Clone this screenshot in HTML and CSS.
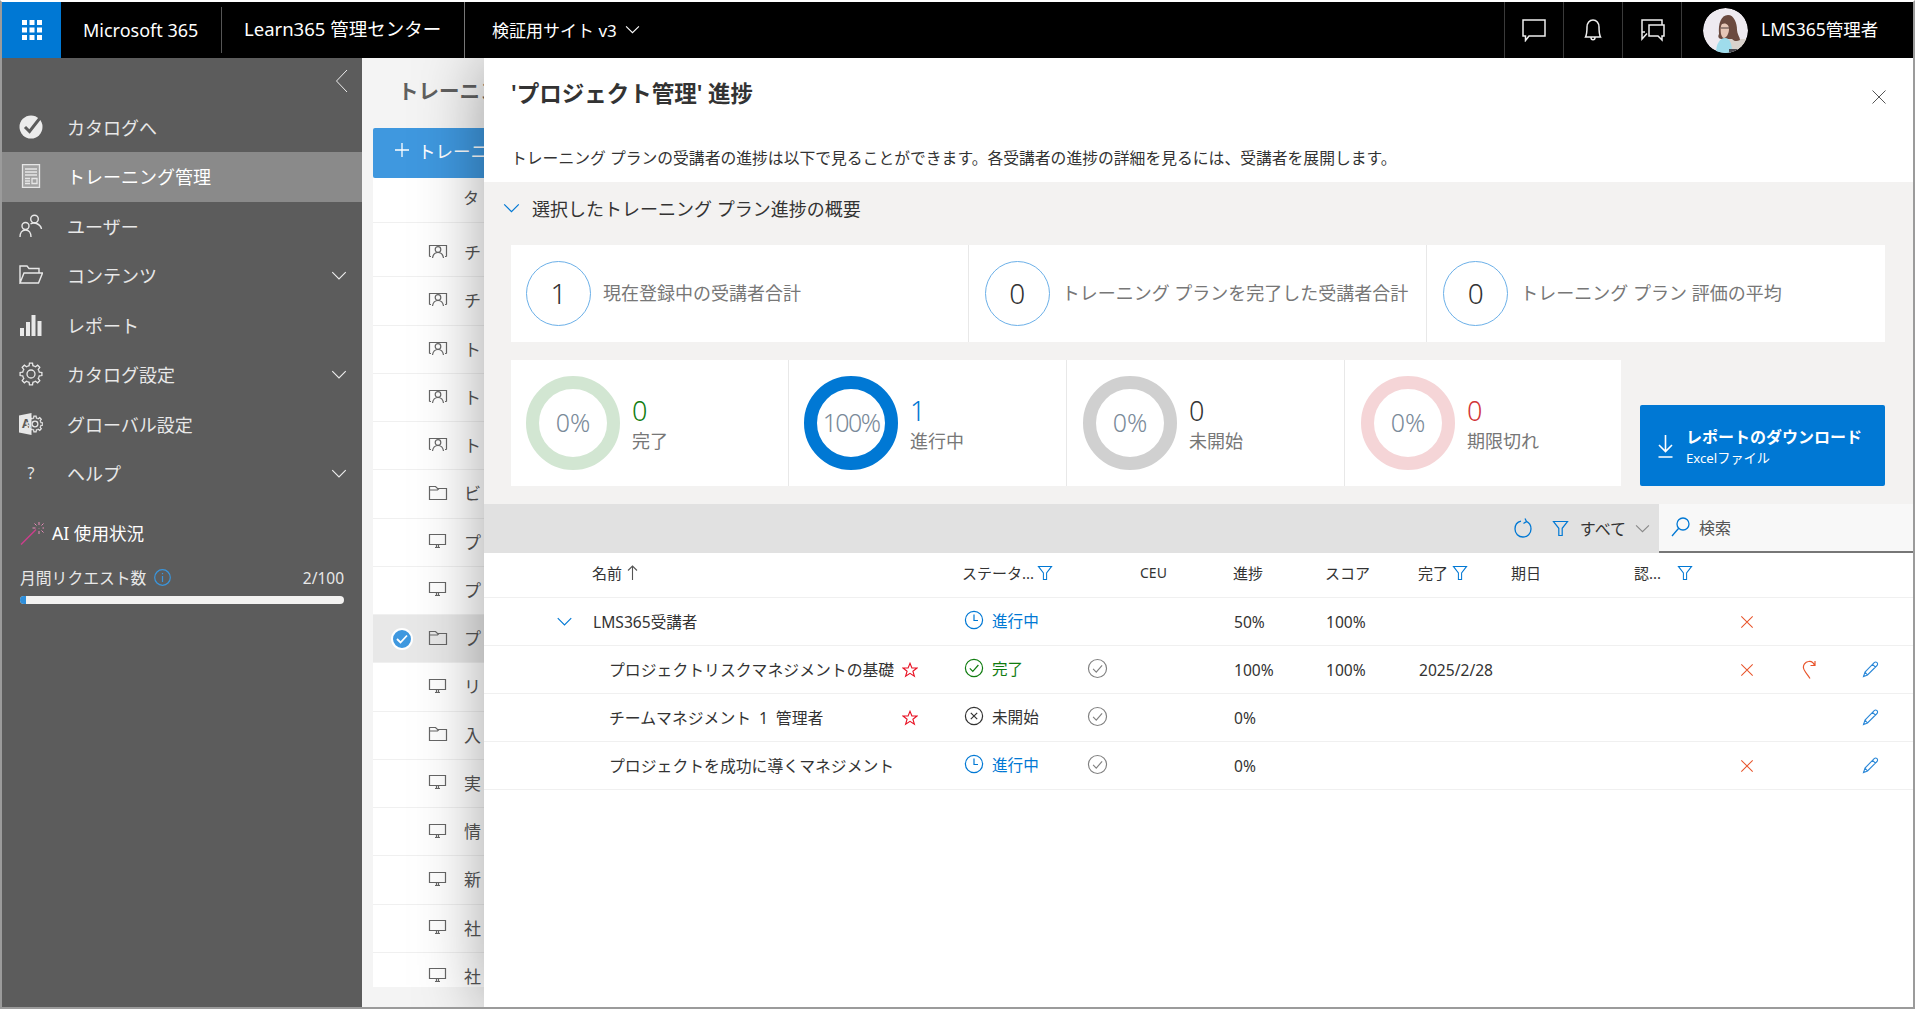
FILE: index.html
```html
<!DOCTYPE html>
<html lang="ja">

<head>
    <meta charset="UTF-8">
    <meta name="viewport" content="width=device-width, initial-scale=1.0">
    <title>プロジェクト管理 進捗</title>
    <link rel="stylesheet" href="styles.css">
</head>

<body>
    <svg class="icon-defs" width="0" height="0">
        <defs>
            <g id="gear-tooth"><path d="M-3.25 -7.85L-1.91 -8.28L-1.53 -10.89L1.53 -10.89L1.91 -8.28L3.25 -7.85"/></g>
            <g id="gear">
                <use href="#gear-tooth"/>
                <use href="#gear-tooth" transform="rotate(45)"/>
                <use href="#gear-tooth" transform="rotate(90)"/>
                <use href="#gear-tooth" transform="rotate(135)"/>
                <use href="#gear-tooth" transform="rotate(180)"/>
                <use href="#gear-tooth" transform="rotate(225)"/>
                <use href="#gear-tooth" transform="rotate(270)"/>
                <use href="#gear-tooth" transform="rotate(315)"/>
                <circle r="4"/>
            </g>
            <g id="i-presenter"><path d="M1.5 12.5V1.5H18.5V12.5M1.5 12.5H3M17 12.5H18.5"/><circle cx="10" cy="5.5" r="2.8"/><path d="M4.5 14C5 10.5 7 8.5 10 8.5S15 10.5 15.5 14"/></g>
            <g id="i-monitor"><path d="M1.5 1.5H17.5V11.5H1.5ZM7 14.5H12"/><path d="M8.5 11.5H10.5V14.5H8.5Z" class="solid"/></g>
            <g id="i-folder"><path d="M1.5 14.5V1.5H7.5L9.5 3.5H18.5V14.5ZM1.5 5H9.5L11 3.5"/></g>
            <g id="i-funnel"><path d="M1 1.5H15L9.7 8.3V15.5H6.3V8.3Z"/></g>
            <g id="i-clock"><circle cx="10" cy="10" r="8.6"/><path d="M10 4.5V10.5H14"/></g>
            <g id="i-check"><circle cx="10" cy="10" r="8.6"/><path d="M5.8 10.4L8.8 13.4L14.4 7"/></g>
            <g id="i-xcircle"><circle cx="10" cy="10" r="8.6"/><path d="M6.8 6.8L13.2 13.2M13.2 6.8L6.8 13.2"/></g>
            <g id="i-star"><path d="M8 1.3L9.9 6H15L10.9 9.2L12.4 14.3L8 11.3L3.6 14.3L5.1 9.2L1 6H6.1Z"/></g>
            <g id="i-cross"><path d="M1.5 1.5L14.5 14.5M14.5 1.5L1.5 14.5"/></g>
            <g id="i-pencil"><path d="M12.2 1.7C13 .9 14.2 .9 15 1.7S15.8 3.7 15 4.5L5.5 14L1.5 15.5L3 11ZM10.6 3.4L13.4 6.2M3 11L5.5 14"/></g>
            <g id="i-chev-down"><path d="M1 1L7 7L13 1"/></g>
        </defs>
    </svg>

    <div class="app">
        <header class="topbar">
            <a class="waffle">
                <svg width="20" height="20" viewBox="0 0 20 20"><path fill="#fff" d="M0 0h5v5H0zM7.500 0h5v5h-5zM15 0h5v5h-5zM0 7.500h5v5H0zM7.500 7.500h5v5h-5zM15 7.500h5v5h-5zM0 15h5v5H0zM7.500 15h5v5h-5zM15 15h5v5h-5z"/></svg>
            </a>
            <div class="topbar-brand">Microsoft 365</div>
            <div class="topbar-app">Learn365 管理センター</div>
            <div class="topbar-site">
                検証用サイト v3
                <svg class="stroke" width="15" height="9" viewBox="0 0 14 8" stroke="#fff"><use href="#i-chev-down"/></svg>
            </div>
            <div class="topbar-right">
                <div class="topbar-icon">
                    <svg class="stroke" width="24" height="24" viewBox="0 0 24 24" stroke="#eee" stroke-width="1.5"><path d="M1 2H23V18H7L3.500 22.500V18H1Z"/></svg>
                </div>
                <div class="topbar-icon">
                    <svg class="stroke" width="18" height="24" viewBox="0 0 18 24" stroke="#eee" stroke-width="1.500"><path d="M1.500 19C3 16 3 13 3 9C3 5 5.500 2 9 2S15 5 15 9C15 13 15 16 16.500 19ZM7 19.500C7 22.500 11 22.500 11 19.500"/></svg>
                </div>
                <div class="topbar-icon">
                    <svg class="stroke" width="25" height="24" viewBox="0 0 25 24" stroke="#eee" stroke-width="1.500"><path d="M5 14H2V2H22V7M2 14V21L7 15.500M9 7H24V18H22V22L18 18H9Z"/></svg>
                </div>
                <div class="topbar-user">
                    <svg class="avatar" width="45" height="45" viewBox="0 0 45 45">
                        <circle cx="22.500" cy="22.500" r="22.500" fill="#eeeaf0"/>
                        <path fill="#d9d2cc" d="M26 31H45V45H26Z"/>
                        <path fill="#6b4a3f" d="M16 26C15 16 18 7 25 7C31 7 34 15 34 22C34 26 37 29 37 32C33 34 31 33 29 31H19C17 31 14 30 16 26Z"/>
                        <path fill="#e6c6b6" d="M18 18C19 14 26 15 26 21C26 26 23 30 21 30C18 30 17 23 18 18Z"/>
                        <path stroke="#4a3a38" fill="none" d="M18 20H26"/>
                        <path fill="#9fdcec" d="M13 45C13 36 17 30 22 30C27 30 29 36 29 45Z"/>
                        <path fill="#4a4a50" d="M26 41H34V45H26Z"/>
                    </svg>
                    LMS365管理者
                </div>
            </div>
        </header>

        <div class="shell">
            <nav class="sidebar">
                <div class="sidebar-collapse">
                    <svg class="stroke" width="13" height="24" viewBox="0 0 13 24" stroke="#eee"><path d="M12 1L1.500 12L12 23"/></svg>
                </div>
                <ul class="nav">
                    <li class="nav-item">
                        <svg class="nav-icon" width="24" height="24" viewBox="0 0 24 24"><circle cx="12" cy="12" r="11.500" fill="#ececec"/><path d="M6 12L10.500 16.500L21 3" fill="none" stroke="#5c5c5c" stroke-width="3"/></svg>
                        カタログへ
                    </li>
                    <li class="nav-item is-active">
                        <svg class="nav-icon stroke" width="24" height="24" viewBox="0 0 24 24" stroke="#e6e6e6" stroke-width="1.300"><path class="nav-doc" d="M3.500 .7H20.500V23.300H3.500Z"/><path d="M6 5H18M6 8H18M6 11H18M6 14.500H11M6 17H11M6 19.500H11M13 14.500H18V19.500H13Z"/></svg>
                        トレーニング管理
                    </li>
                    <li class="nav-item">
                        <svg class="nav-icon stroke" width="24" height="24" viewBox="0 0 24 24" stroke="#e8e8e8" stroke-width="1.400"><circle cx="15.500" cy="5" r="3.800"/><circle cx="6.500" cy="12" r="3.500"/><path d="M11.500 10C13 9 15.500 8.800 17.500 9.500C20 10.500 22 12 22.500 15M1 23C1 19 3 16 6.500 16S12 19 12 23"/></svg>
                        ユーザー
                    </li>
                    <li class="nav-item">
                        <svg class="nav-icon stroke" width="24" height="24" viewBox="0 0 24 24" stroke="#e8e8e8" stroke-width="1.400"><path d="M1 20V3H8L10 5.500H20V10M1 20L5 10H23.500L19.500 20Z"/></svg>
                        コンテンツ
                        <svg class="nav-chevron stroke" width="16" height="9" viewBox="0 0 14 8" stroke="#eee"><use href="#i-chev-down"/></svg>
                    </li>
                    <li class="nav-item">
                        <svg class="nav-icon" width="24" height="24" viewBox="0 0 24 24" fill="#e8e8e8"><path d="M1 15H5V23H1ZM7 9H11V23H7ZM12.500 2H16.500V23H12.500ZM18.500 8H22.500V23H18.500Z"/></svg>
                        レポート
                    </li>
                    <li class="nav-item">
                        <svg class="nav-icon stroke" width="24" height="24" viewBox="0 0 24 24" stroke="#e8e8e8" stroke-width="1.300"><use href="#gear" transform="translate(12 12)"/></svg>
                        カタログ設定
                        <svg class="nav-chevron stroke" width="16" height="9" viewBox="0 0 14 8" stroke="#eee"><use href="#i-chev-down"/></svg>
                    </li>
                    <li class="nav-item">
                        <svg class="nav-icon" width="24" height="24" viewBox="0 0 24 24">
                            <path fill="#e8e8e8" d="M0 3.500L12.500 1V23L0 20.500Z"/>
                            <text x="3" y="16" class="nav-icon-a">A</text>
                            <use href="#gear" class="stroke" stroke="#e8e8e8" transform="translate(16 12) scale(.72)" stroke-width="1.700"/>
                        </svg>
                        グローバル設定
                    </li>
                    <li class="nav-item">
                        <span class="nav-icon nav-help">?</span>
                        ヘルプ
                        <svg class="nav-chevron stroke" width="16" height="9" viewBox="0 0 14 8" stroke="#eee"><use href="#i-chev-down"/></svg>
                    </li>
                </ul>
                <div class="usage">
                    <div class="usage-title">
                        <svg class="stroke" width="24" height="24" viewBox="0 0 24 24" stroke="#cc3f8d">
                            <path d="M1 23.500L16 8.500" stroke-width="1.500"/>
                            <path d="M19 1V4M19 10V13M12.500 7H15.500M22.500 7H24M14.500 2.500L16.500 4.500M21.500 9.500L23.500 11.500M23.500 2.500L21.500 4.500M19 7V7.500" stroke="#e88ab8"/>
                        </svg>
                        AI 使用状況
                    </div>
                    <div class="usage-row">
                        <span class="usage-label">月間リクエスト数</span>
                        <svg class="stroke" width="17" height="17" viewBox="0 0 17 17" stroke="#3a96dd" stroke-width="1.200"><circle cx="8.500" cy="8.500" r="7.800"/><path d="M8.500 7V13M8.500 4V5.300"/></svg>
                        <span class="usage-count">2/100</span>
                    </div>
                    <div class="usage-bar"><div class="usage-fill" style="width: 2%"></div></div>
                </div>
            </nav>

            <main class="main">
                <h1 class="main-title">トレーニン</h1>
                <button class="main-add">
                    <svg class="stroke" width="14" height="14" viewBox="0 0 14 14" stroke="#fff" stroke-width="1.300"><path d="M7 0V14M0 7H14"/></svg>
                    トレーニ
                </button>
                <div class="plans">
                    <div class="plans-head">タ</div>
                    <div class="plan-row"><svg class="plan-icon stroke" width="20" height="15" viewBox="0 0 20 15"><use href="#i-presenter"/></svg>チ</div>
                    <div class="plan-row"><svg class="plan-icon stroke" width="20" height="15" viewBox="0 0 20 15"><use href="#i-presenter"/></svg>チ</div>
                    <div class="plan-row"><svg class="plan-icon stroke" width="20" height="15" viewBox="0 0 20 15"><use href="#i-presenter"/></svg>ト</div>
                    <div class="plan-row"><svg class="plan-icon stroke" width="20" height="15" viewBox="0 0 20 15"><use href="#i-presenter"/></svg>ト</div>
                    <div class="plan-row"><svg class="plan-icon stroke" width="20" height="15" viewBox="0 0 20 15"><use href="#i-presenter"/></svg>ト</div>
                    <div class="plan-row"><svg class="plan-icon stroke" width="20" height="16" viewBox="0 0 20 16"><use href="#i-folder"/></svg>ビ</div>
                    <div class="plan-row"><svg class="plan-icon stroke" width="20" height="16" viewBox="0 0 20 16"><use href="#i-monitor"/></svg>プ</div>
                    <div class="plan-row"><svg class="plan-icon stroke" width="20" height="16" viewBox="0 0 20 16"><use href="#i-monitor"/></svg>プ</div>
                    <div class="plan-row is-selected">
                        <span class="plan-check"><svg class="stroke" width="12" height="10" viewBox="0 0 12 10" stroke="#fff" stroke-width="1.800"><path d="M1 5L4.500 8.500L11 1.500"/></svg></span>
                        <svg class="plan-icon stroke" width="20" height="16" viewBox="0 0 20 16"><use href="#i-folder"/></svg>プ
                    </div>
                    <div class="plan-row"><svg class="plan-icon stroke" width="20" height="16" viewBox="0 0 20 16"><use href="#i-monitor"/></svg>リ</div>
                    <div class="plan-row"><svg class="plan-icon stroke" width="20" height="16" viewBox="0 0 20 16"><use href="#i-folder"/></svg>入</div>
                    <div class="plan-row"><svg class="plan-icon stroke" width="20" height="16" viewBox="0 0 20 16"><use href="#i-monitor"/></svg>実</div>
                    <div class="plan-row"><svg class="plan-icon stroke" width="20" height="16" viewBox="0 0 20 16"><use href="#i-monitor"/></svg>情</div>
                    <div class="plan-row"><svg class="plan-icon stroke" width="20" height="16" viewBox="0 0 20 16"><use href="#i-monitor"/></svg>新</div>
                    <div class="plan-row"><svg class="plan-icon stroke" width="20" height="16" viewBox="0 0 20 16"><use href="#i-monitor"/></svg>社</div>
                    <div class="plan-row"><svg class="plan-icon stroke" width="20" height="16" viewBox="0 0 20 16"><use href="#i-monitor"/></svg>社</div>
                </div>
            </main>

            <section class="panel">
                <button class="panel-close"><svg class="stroke" width="16" height="16" viewBox="0 0 16 16" stroke="#555" stroke-width="1"><use href="#i-cross"/></svg></button>
                <h2 class="panel-title">'プロジェクト管理' 進捗</h2>
                <p class="panel-desc">トレーニング プランの受講者の進捗は以下で見ることができます。各受講者の進捗の詳細を見るには、受講者を展開します。</p>

                <div class="summary">
                    <div class="summary-head">
                        <svg class="stroke" width="17" height="10" viewBox="0 0 14 8" stroke="#0078d4"><use href="#i-chev-down"/></svg>
                        選択したトレーニング プラン進捗の概要
                    </div>
                    <div class="kpis">
                        <div class="kpi"><div class="kpi-circle">1</div><div class="kpi-text">現在登録中の受講者合計</div></div>
                        <div class="kpi"><div class="kpi-circle">0</div><div class="kpi-text">トレーニング プランを完了した受講者合計</div></div>
                        <div class="kpi"><div class="kpi-circle">0</div><div class="kpi-text">トレーニング プラン 評価の平均</div></div>
                    </div>
                    <div class="stats-row">
                        <div class="stats">
                            <div class="stat">
                                <div class="ring ring-green">0%</div>
                                <div class="stat-text"><div class="stat-num num-green">0</div><div class="stat-label">完了</div></div>
                            </div>
                            <div class="stat">
                                <div class="ring ring-blue">100%</div>
                                <div class="stat-text"><div class="stat-num num-blue">1</div><div class="stat-label">進行中</div></div>
                            </div>
                            <div class="stat">
                                <div class="ring ring-grey">0%</div>
                                <div class="stat-text"><div class="stat-num">0</div><div class="stat-label">未開始</div></div>
                            </div>
                            <div class="stat">
                                <div class="ring ring-red">0%</div>
                                <div class="stat-text"><div class="stat-num num-red">0</div><div class="stat-label">期限切れ</div></div>
                            </div>
                        </div>
                        <button class="download">
                            <svg class="stroke" width="17" height="24" viewBox="0 0 16 24" stroke="#fff" stroke-width="1.600"><path d="M8 1V17M1.500 11L8 17.500L14.500 11M1 23H15"/></svg>
                            <span class="download-text"><b>レポートのダウンロード</b><small>Excelファイル</small></span>
                        </button>
                    </div>
                </div>

                <div class="toolbar">
                    <svg class="stroke refresh" width="18" height="20" viewBox="0 0 18 20" stroke="#0078d4" stroke-width="1.300"><path d="M12 3.200C15 4.500 17 7 17 11C17 15.500 13.500 19 9 19S1 15.500 1 11C1 7 3.500 4 7 3.200M11 .5L12.500 3.500L9.500 5.500"/></svg>
                    <svg class="stroke filter-all" width="17" height="17" viewBox="0 0 16 17" stroke="#0078d4" stroke-width="1.200"><use href="#i-funnel"/></svg>
                    <span class="toolbar-all">すべて</span>
                    <svg class="stroke toolbar-chev" width="15" height="9" viewBox="0 0 14 8" stroke="#888"><use href="#i-chev-down"/></svg>
                    <div class="search">
                        <svg class="stroke" width="19" height="20" viewBox="0 0 19 20" stroke="#0078d4" stroke-width="1.300"><circle cx="12" cy="7" r="6"/><path d="M7.700 11.300L1 19"/></svg>
                        検索
                    </div>
                </div>

                <div class="t-row t-head">
                    <span></span>
                    <span class="t-name-head">名前 <svg class="stroke" width="11" height="15" viewBox="0 0 11 15" stroke="#555" stroke-width="1.100"><path d="M5.500 15V1M1 5.500L5.500 1L10 5.500"/></svg></span>
                    <span class="t-filter t-filter-tight">ステータ...<svg class="stroke" width="16" height="16" viewBox="0 0 16 17" stroke="#0078d4" stroke-width="1.100"><use href="#i-funnel"/></svg></span>
                    <span></span>
                    <span class="t-ceu">CEU</span>
                    <span>進捗</span>
                    <span>スコア</span>
                    <span class="t-filter">完了<svg class="stroke" width="16" height="16" viewBox="0 0 16 17" stroke="#0078d4" stroke-width="1.100"><use href="#i-funnel"/></svg></span>
                    <span>期日</span>
                    <span class="t-filter t-filter-wide">認...<svg class="stroke" width="16" height="16" viewBox="0 0 16 17" stroke="#0078d4" stroke-width="1.100"><use href="#i-funnel"/></svg></span>
                    <span></span><span></span><span></span><span></span>
                </div>

                <div class="t-row">
                    <span class="t-expand"><svg class="stroke" width="17" height="9" viewBox="0 0 14 8" stroke="#0078d4"><use href="#i-chev-down"/></svg></span>
                    <span class="t-user">LMS365受講者</span>
                    <span class="t-status st-blue"><svg class="stroke" width="20" height="20" viewBox="0 0 20 20"><use href="#i-clock"/></svg>進行中</span>
                    <span></span><span></span>
                    <span class="t-val">50%</span>
                    <span class="t-val">100%</span>
                    <span></span><span></span><span></span>
                    <span class="t-act t-x"><svg class="stroke" width="14" height="14" viewBox="0 0 16 16"><use href="#i-cross"/></svg></span>
                    <span></span><span></span><span></span>
                </div>
                <div class="t-row">
                    <span></span>
                    <span class="t-course">プロジェクトリスクマネジメントの基礎<svg class="star stroke" width="16" height="16" viewBox="0 0 16 16"><use href="#i-star"/></svg></span>
                    <span class="t-status st-green"><svg class="stroke" width="20" height="20" viewBox="0 0 20 20"><use href="#i-check"/></svg>完了</span>
                    <span class="t-ok"><svg class="stroke" width="21" height="21" viewBox="0 0 20 20"><use href="#i-check"/></svg></span>
                    <span></span>
                    <span class="t-val">100%</span>
                    <span class="t-val">100%</span>
                    <span class="t-val">2025/2/28</span>
                    <span></span><span></span>
                    <span class="t-act t-x"><svg class="stroke" width="14" height="14" viewBox="0 0 16 16"><use href="#i-cross"/></svg></span>
                    <span class="t-act t-x"><svg class="stroke" width="14" height="20" viewBox="0 0 14 20"><path d="M12.500 5.500C11.500 2.500 9 1 6.500 1.500C3 2 1 5 1.500 8C2 11 5 14 8 18.500M8.500 5.500H13V1"/></svg></span>
                    <span class="t-act t-pen"><svg class="stroke" width="17" height="17" viewBox="0 0 17 17"><use href="#i-pencil"/></svg></span>
                    <span></span>
                </div>
                <div class="t-row">
                    <span></span>
                    <span class="t-course">チームマネジメント 1 管理者<svg class="star stroke" width="16" height="16" viewBox="0 0 16 16"><use href="#i-star"/></svg></span>
                    <span class="t-status st-dark"><svg class="stroke" width="20" height="20" viewBox="0 0 20 20"><use href="#i-xcircle"/></svg>未開始</span>
                    <span class="t-ok"><svg class="stroke" width="21" height="21" viewBox="0 0 20 20"><use href="#i-check"/></svg></span>
                    <span></span>
                    <span class="t-val">0%</span>
                    <span></span><span></span><span></span><span></span><span></span><span></span>
                    <span class="t-act t-pen"><svg class="stroke" width="17" height="17" viewBox="0 0 17 17"><use href="#i-pencil"/></svg></span>
                    <span></span>
                </div>
                <div class="t-row">
                    <span></span>
                    <span class="t-course">プロジェクトを成功に導くマネジメント</span>
                    <span class="t-status st-blue"><svg class="stroke" width="20" height="20" viewBox="0 0 20 20"><use href="#i-clock"/></svg>進行中</span>
                    <span class="t-ok"><svg class="stroke" width="21" height="21" viewBox="0 0 20 20"><use href="#i-check"/></svg></span>
                    <span></span>
                    <span class="t-val">0%</span>
                    <span></span><span></span><span></span><span></span>
                    <span class="t-act t-x"><svg class="stroke" width="14" height="14" viewBox="0 0 16 16"><use href="#i-cross"/></svg></span>
                    <span></span>
                    <span class="t-act t-pen"><svg class="stroke" width="17" height="17" viewBox="0 0 17 17"><use href="#i-pencil"/></svg></span>
                    <span></span>
                </div>
            </section>
        </div>
    </div>
</body>

</html>
```

FILE: styles.css
```css
* {
    box-sizing: border-box;
}

html,
body {
    height: 100%;
    margin: 0;
}

body {
    font-family: "Noto Sans", "Noto Sans CJK JP", sans-serif;
    color: #333333;
    background: #ffffff;
    overflow: hidden;
}

button {
    font-family: inherit;
    border: 0;
    padding: 0;
}

ul {
    list-style: none;
    margin: 0;
    padding: 0;
}

.icon-defs {
    position: absolute;
}

.stroke {
    fill: none;
    stroke-linejoin: miter;
}

.stroke .solid {
    fill: currentColor;
}

.app {
    height: 100vh;
    display: flex;
    flex-direction: column;
    border: 2px solid #9b9b9b;
    border-top-color: #ffffff;
}

/* top bar */
.topbar {
    height: 56px;
    flex: none;
    display: flex;
    align-items: center;
    background: #000000;
    color: #ffffff;
    font-size: 18px;
}

.waffle {
    width: 59px;
    height: 100%;
    display: flex;
    align-items: center;
    justify-content: center;
    background: #0078d4;
}

.topbar-brand {
    width: 161px;
    height: 46px;
    padding-left: 22px;
    line-height: 46px;
    border-right: 1px solid #555555;
}

.topbar-app {
    width: 243px;
    height: 100%;
    padding-left: 22px;
    font-size: 18.5px;
    line-height: 54px;
    border-right: 1px solid #777777;
}

.topbar-site {
    padding-left: 27px;
    padding-bottom: 2px;
    display: flex;
    align-items: center;
    gap: 8px;
    font-size: 17px;
}

.topbar-right {
    margin-left: auto;
    height: 100%;
    display: flex;
}

.topbar-icon {
    width: 59px;
    display: flex;
    align-items: center;
    justify-content: center;
    border-left: 1px solid #3a3a3a;
}

.topbar-user {
    width: 232px;
    padding-left: 21px;
    padding-bottom: 3px;
    display: flex;
    align-items: center;
    gap: 13px;
    border-left: 1px solid #3a3a3a;
    font-size: 17.5px;
}

.avatar {
    border-radius: 50%;
    margin-top: 3px;
}

/* layout below top bar */
.shell {
    flex: 1;
    min-height: 0;
    display: flex;
    overflow: hidden;
}

/* left navigation */
.sidebar {
    width: 360px;
    flex: none;
    background: #5c5c5c;
    color: #e8e8e8;
    font-size: 18px;
}

.sidebar-collapse {
    height: 44.5px;
    padding: 11px 14px 0 0;
    text-align: right;
}

.nav-item {
    height: 49.5px;
    display: flex;
    align-items: center;
    padding-left: 17px;
    padding-bottom: 1px;
}

.nav-item.is-active {
    background: #8a8a8a;
    color: #ffffff;
}

.nav-icon {
    width: 24px;
    flex: none;
    margin-right: 24px;
}

.nav-doc {
    fill: rgba(255, 255, 255, 0.22);
}

.nav-icon-a {
    font-size: 12px;
    font-weight: bold;
    fill: #5c5c5c;
}

.nav-help {
    font-size: 16px;
    text-align: center;
}

.nav-chevron {
    margin-left: auto;
    margin-right: 15px;
}

.usage {
    margin-top: 21px;
    padding: 0 18px;
}

.usage-title {
    display: flex;
    align-items: center;
    gap: 8px;
    color: #ffffff;
    font-size: 17.6px;
    height: 26px;
}

.usage-row {
    display: flex;
    align-items: center;
    gap: 8px;
    margin-top: 18px;
    padding-top: 2px;
    height: 26px;
    font-size: 15.8px;
}

.usage-count {
    margin-left: auto;
    font-size: 15.5px;
}

.usage-bar {
    margin-top: 6px;
    height: 8px;
    border-radius: 4px;
    background: #f3f2f1;
    overflow: hidden;
}

.usage-fill {
    height: 100%;
    background: #2f8fdb;
}

/* plan list behind the panel */
.main {
    width: 122px;
    flex: none;
    display: flex;
    flex-direction: column;
    overflow: hidden;
    background: #f4f4f4;
    padding: 0 0 20px 11px;
}

.main-title {
    height: 70px;
    margin: 0;
    padding-left: 25px;
    font-size: 20.5px;
    font-weight: 600;
    line-height: 66px;
    color: #606060;
    white-space: nowrap;
    overflow: hidden;
}

.main-add {
    height: 50px;
    flex: none;
    display: flex;
    align-items: center;
    gap: 9px;
    padding: 0 0 6px 22px;
    text-align: left;
    background: #3f98df;
    color: #ffffff;
    font-size: 17.5px;
    border-radius: 2px 0 0 2px;
    white-space: nowrap;
    overflow: hidden;
}

.main-add svg {
    flex: none;
}

.plans {
    flex: 1;
    min-height: 0;
    overflow: hidden;
    background: #ffffff;
    font-size: 17px;
    color: #555555;
}

.plans-head {
    height: 45px;
    padding-left: 90px;
    line-height: 40px;
    font-size: 16px;
    border-bottom: 1px solid #f0f0f0;
    margin-bottom: 6px;
    white-space: nowrap;
}

.plan-row {
    height: 48.25px;
    position: relative;
    display: flex;
    align-items: center;
    padding-left: 55px;
    padding-bottom: 2px;
    border-bottom: 1px solid #f0f0f0;
    white-space: nowrap;
}

.plan-row.is-selected {
    background: #e8e8e8;
}

.plan-icon {
    width: 20px;
    flex: none;
    margin-right: 16px;
    stroke: #666666;
    stroke-width: 1.2;
    color: #666666;
}

.plan-check {
    position: absolute;
    left: 18px;
    top: 13px;
    width: 22px;
    height: 22px;
    border-radius: 50%;
    background: #3f98df;
    border: 2px solid #ffffff;
    display: flex;
    align-items: center;
    justify-content: center;
}

/* progress panel */
.panel {
    flex: 1;
    min-width: 0;
    position: relative;
    background: #ffffff;
    box-shadow: 0 0 64px rgba(0, 0, 0, 0.36);
}

.panel-close {
    position: absolute;
    right: 26px;
    top: 31px;
    width: 16px;
    height: 16px;
    background: none;
}

.panel-title {
    margin: 0;
    padding: 21px 0 0 27px;
    height: 65px;
    font-size: 22.5px;
    font-weight: 600;
    line-height: 30px;
}

.panel-desc {
    margin: 0;
    height: 59px;
    padding: 23px 0 0 27px;
    font-size: 15.8px;
    line-height: 24px;
    color: #333333;
}

.summary {
    background: #f3f2f1;
    padding: 0 28px 18px 27px;
}

.summary-head {
    height: 63px;
    padding-bottom: 11px;
    margin-left: -8px;
    display: flex;
    align-items: center;
    gap: 12px;
    font-size: 18px;
}

.kpis {
    display: flex;
    height: 97px;
    background: #ffffff;
}

.kpi {
    flex: 1;
    display: flex;
    align-items: center;
    gap: 12px;
    padding-left: 15px;
    border-right: 1px solid #e8e8e8;
}

.kpi + .kpi {
    padding-left: 16px;
}

.kpi:last-child {
    border-right: 0;
}

.kpi-circle {
    width: 65px;
    height: 65px;
    flex: none;
    display: flex;
    align-items: center;
    justify-content: center;
    padding-bottom: 2px;
    border: 1px solid #6cb0e8;
    border-radius: 50%;
    font-size: 28px;
    font-weight: 300;
    color: #333333;
}

.kpi-text {
    font-size: 18px;
    color: #777777;
    white-space: nowrap;
    padding-bottom: 3px;
}

.stats-row {
    display: flex;
    align-items: flex-end;
    gap: 19px;
    margin-top: 18px;
}

.stats {
    width: 1110px;
    height: 126px;
    flex: none;
    display: flex;
    background: #ffffff;
}

.stat {
    flex: none;
    width: 278px;
    display: flex;
    align-items: center;
    gap: 12px;
    padding-left: 15px;
    border-right: 1px solid #e8e8e8;
}

.stat:nth-child(n+3) {
    padding-left: 16px;
}

.stat:last-child {
    flex: 1;
    border-right: 0;
}

.ring {
    width: 94px;
    height: 94px;
    flex: none;
    display: flex;
    align-items: center;
    justify-content: center;
    padding-bottom: 3px;
    border: 13.5px solid;
    border-radius: 50%;
    font-size: 25px;
    font-weight: 300;
    color: #7a8a99;
}

.ring-green {
    border-color: #d2e6d2;
}

.ring-blue {
    border-color: #0078d4;
    letter-spacing: -1.6px;
}

.ring-grey {
    border-color: #d0d0d0;
}

.ring-red {
    border-color: #f5d5d7;
}

.stat-text {
    padding-top: 1px;
}

.stat-num {
    font-size: 27px;
    font-weight: 300;
    line-height: 34px;
    color: #333333;
}

.num-green {
    color: #107c10;
}

.num-blue {
    color: #0078d4;
}

.num-red {
    color: #d13438;
}

.stat-label {
    font-size: 18px;
    line-height: 26px;
    color: #777777;
}

.download {
    flex: 1;
    height: 81px;
    display: flex;
    align-items: center;
    gap: 12px;
    padding-left: 17px;
    background: #0078d4;
    color: #ffffff;
    border-radius: 2px;
    text-align: left;
}

.download-text b {
    display: block;
    font-size: 16px;
    font-weight: bold;
}

.download-text small {
    display: block;
    font-size: 13.2px;
}

.toolbar {
    height: 49px;
    display: flex;
    align-items: center;
    justify-content: flex-end;
    background: #e1e1e1;
    font-size: 16px;
}

.toolbar-all {
    margin-top: -2px;
}

.filter-all {
    margin-left: 21px;
    margin-right: 11px;
}

.toolbar-chev {
    margin-left: 9px;
    margin-right: 9px;
}

.search {
    width: 254px;
    height: 100%;
    display: flex;
    align-items: center;
    gap: 9px;
    padding-left: 12px;
    padding-bottom: 2px;
    background: #f8f8f8;
    border-bottom: 2px solid #777777;
    color: #555555;
}

.refresh {
    margin-right: -1px;
    margin-top: -2px;
}

/* enrolment table */
.t-row {
    height: 48px;
    display: grid;
    grid-template-columns: 107px 371px 124px 54px 93px 92px 93px 93px 123px 87px 52px 72px 50px 18px;
    align-items: center;
    border-bottom: 1px solid #f0f0f0;
    font-size: 15.6px;
    color: #333333;
    white-space: nowrap;
}

.t-head {
    height: 45px;
    padding-bottom: 5px;
    font-size: 15px;
}

.t-ceu {
    font-size: 14px;
}

.t-name-head {
    display: flex;
    align-items: center;
    gap: 5px;
    padding-left: 1px;
}

.t-filter {
    display: flex;
    align-items: center;
    gap: 4px;
}

.t-filter-tight {
    gap: 3px;
}

.t-filter-wide {
    gap: 16px;
}

.t-expand {
    padding-left: 72px;
    display: flex;
}

.t-user {
    padding-left: 2px;
    font-size: 15.6px;
}

.t-course {
    padding: 0 44px 0 18px;
    display: flex;
    align-items: center;
    font-size: 15.85px;
    word-spacing: 3.7px;
}

.star {
    margin-left: auto;
    stroke: #e81123;
    stroke-width: 1.1;
}

.t-status {
    display: flex;
    align-items: center;
    gap: 8px;
    padding-left: 2px;
    margin-top: -3px;
}

.st-blue {
    color: #0078d4;
}

.st-blue svg {
    stroke: #0078d4;
    stroke-width: 1.2;
}

.st-green {
    color: #107c10;
}

.st-green svg {
    stroke: #107c10;
    stroke-width: 1.2;
}

.st-dark svg {
    stroke: #333333;
    stroke-width: 1.2;
}

.t-ok {
    padding-left: 1px;
    display: flex;
    margin-top: -3px;
}

.t-ok svg {
    stroke: #808080;
    stroke-width: 1.1;
}

.t-val {
    padding-left: 1px;
}

.t-act {
    display: flex;
    justify-content: center;
}

.t-x svg {
    stroke: #e8552c;
    stroke-width: 1.2;
}

.t-pen svg {
    stroke: #2b88d8;
    stroke-width: 1.1;
}
```
